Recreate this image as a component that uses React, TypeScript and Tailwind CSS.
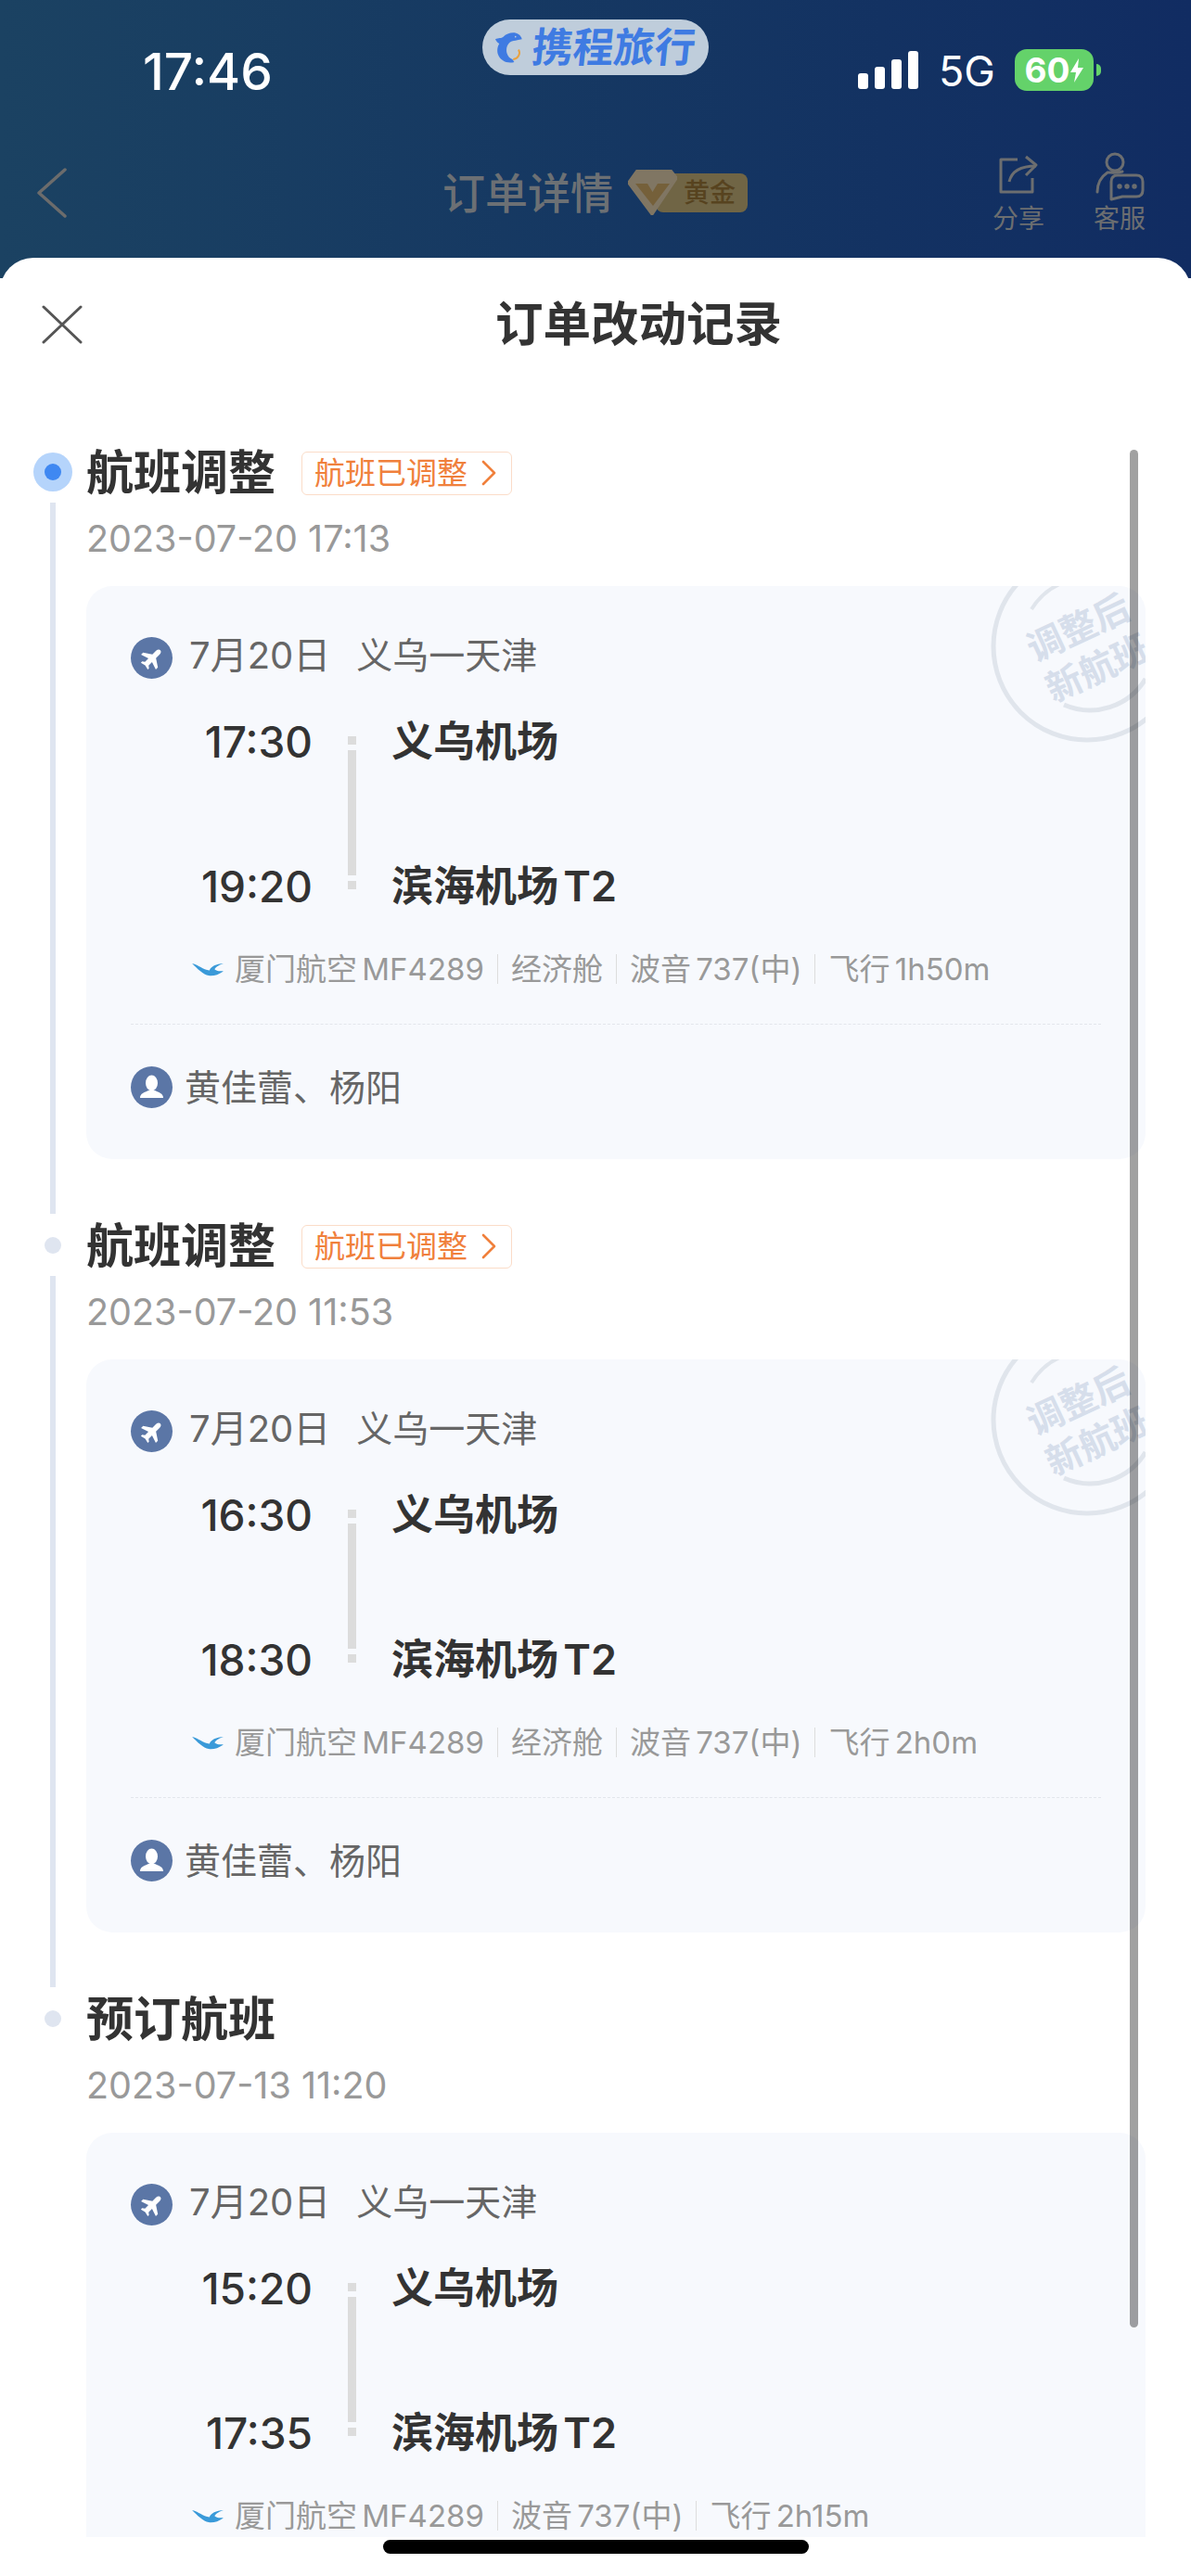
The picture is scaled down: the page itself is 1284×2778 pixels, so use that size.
type Flight = {
  title: string;
  time: string;
  badge: boolean;
  dep: string;
  arr: string;
  info: string[];
  passengers: boolean;
};

const ITEMS: Flight[] = [
  {
    title: "航班调整",
    time: "2023-07-20 17:13",
    badge: true,
    dep: "17:30",
    arr: "19:20",
    info: ["厦门航空 MF4289", "经济舱", "波音 737(中)", "飞行 1h50m"],
    passengers: true,
  },
  {
    title: "航班调整",
    time: "2023-07-20 11:53",
    badge: true,
    dep: "16:30",
    arr: "18:30",
    info: ["厦门航空 MF4289", "经济舱", "波音 737(中)", "飞行 2h0m"],
    passengers: true,
  },
  {
    title: "预订航班",
    time: "2023-07-13 11:20",
    badge: false,
    dep: "15:20",
    arr: "17:35",
    info: ["厦门航空 MF4289", "波音 737(中)", "飞行 2h15m"],
    passengers: false,
  },
];

function Dolphin() {
  return (
    <svg viewBox="0 0 88 100" className="h-[33px] w-[29px] shrink-0">
      <path
        d="M0 22C10 16 20 20 26 14C38 2 62-4 76 6C82 10 86 16 87 22L72 25C64 28 56 26 48 32C38 40 34 54 38 68C41 78 48 85 56 88L62 97C40 103 16 94 8 70C5 58 7 46 13 36C7 34 3 28 0 22Z"
        fill="#3f7be2"
      />
      <circle cx="66" cy="14" r="2.500" fill="#c3cfdc" />
      <path d="M76 56C84 70 74 86 58 88" fill="none" stroke="#e9a13f" strokeWidth="6" />
      <path d="M46 62C44 74 50 84 60 84" fill="none" stroke="#c3cfdc" strokeWidth="2.500" />
    </svg>
  );
}

function ShareIcon() {
  return (
    <svg viewBox="0 0 46 44" className="h-[44px] w-[46px]" fill="none" stroke="#6c6e70" strokeWidth="3">
      <path d="M22 5H4V40H38V25" strokeLinejoin="round" />
      <path d="M13 29C15 20 22 12 42 12" />
      <path d="M31 2L42 11L31 22" strokeLinejoin="round" />
    </svg>
  );
}

function ServiceIcon() {
  return (
    <svg viewBox="0 0 54 54" className="h-[54px] w-[54px]" fill="none" stroke="#6c6e70" strokeWidth="3">
      <circle cx="22" cy="12" r="9" />
      <path d="M3 44C3 34 8 27 14 23C18 23 24 24 30 22" strokeLinecap="round" />
      <path d="M18 52V33Q18 26 25 26H45Q52 26 52 33V42Q52 49 45 49H30L18 52Z" strokeLinejoin="round" />
      <circle cx="27" cy="38" r="1.2" />
      <circle cx="35" cy="38" r="1.2" />
      <circle cx="43" cy="38" r="1.2" />
    </svg>
  );
}

function GoldBadge() {
  return (
    <div className="ml-[18px] flex items-center">
      <svg viewBox="0 0 53 49" className="relative z-10 h-[49px] w-[53px]">
        <path d="M10 0H46L53 9L26 49L0 14Z" fill="#807663" stroke="#807663" strokeLinejoin="round" strokeWidth="2" />
        <path d="M8 15H21L26.5 24L32 15H45L27 39Z" fill="#75603a" />
      </svg>
      <div className="-ml-[23px] flex h-[42px] w-[99px] items-center justify-end rounded-[8px] bg-[#706545] pr-[13px] text-[28px] font-medium text-[#57431f]">
        黄金
      </div>
    </div>
  );
}

function CloseIcon() {
  return (
    <svg viewBox="0 0 44 42" className="h-[42px] w-[44px]" stroke="#555555" strokeWidth="3" strokeLinecap="round">
      <path d="M2 2L42 40M42 2L2 40" />
    </svg>
  );
}

function PlaneBadge() {
  return (
    <div className="flex size-[45px] shrink-0 items-center justify-center rounded-full bg-[#5b76a6]">
      <svg viewBox="0 0 24 24" className="size-[30px] rotate-45" fill="white">
        <path d="M12 2c1.200 0 2.200 1.200 2.200 3v4.500l6.800 4.500v2.500l-6.800-2.200v4.200l2 1.500v1.500l-4.200-1-4.200 1v-1.500l2-1.500v-4.200L3 16.500V14l6.800-4.500V5c0-1.800 1-3 2.200-3z" />
      </svg>
    </div>
  );
}

function PersonBadge() {
  return (
    <div className="flex size-[45px] shrink-0 items-center justify-center rounded-full bg-[#5b76a6]">
      <svg viewBox="0 0 45 45" className="size-[45px]" fill="white">
        <ellipse cx="22.500" cy="18" rx="6.500" ry="8.500" />
        <path d="M10 34C10 29 15 28 19 26H26C30 28 35 29 35 34Z" />
      </svg>
    </div>
  );
}

function AirlineLogo() {
  return (
    <svg viewBox="0 0 36 16" className="h-[15px] w-[34px] shrink-0" fill="#3a9ad9">
      <path d="M0 1C8 3 12 8 20 9C21 5 28 1 36 1C30 3 26 6 26 8C28 10 33 10 36 10C30 14 24 16 19 15C13 14 6 7 0 1Z" />
    </svg>
  );
}

function Stamp() {
  return (
    <svg viewBox="0 0 240 240" className="absolute -top-[55px] -right-[57px] size-[240px]" fill="none">
      <circle cx="120" cy="120" r="101" stroke="#e0e5ec" strokeWidth="5" />
      <path d="M60 80A72 72 0 0 1 150 52" stroke="#e0e5ec" strokeWidth="4" />
      <path d="M95 183A70 70 0 0 0 183 155" stroke="#e0e5ec" strokeWidth="5" />
      <g transform="rotate(-25 120 120)" fill="#d6deeb" fontSize="39" fontWeight="700" textAnchor="middle">
        <text x="120" y="112">调整后</text>
        <text x="120" y="160">新航班</text>
      </g>
    </svg>
  );
}

function FlightCard({ item }: { item: Flight }) {
  return (
    <div className="relative mt-[28px] h-[618px] w-[1142px] overflow-hidden rounded-[28px] bg-[#f7f9fd] pt-[55px] pl-[48px]">
      {item.badge ? <Stamp /> : null}
      <div className="flex h-[45px] items-center text-[#666666]">
        <PlaneBadge />
        <span className="ml-[18px] -translate-y-[3px] text-[40px] leading-none">7月20日</span>
        <span className="ml-[28px] -translate-y-[3px] text-[39px] leading-none">义乌一天津</span>
      </div>

      <div className="mt-[43px] flex h-[206px]">
        <div className="flex w-[196px] flex-col items-end justify-between text-[46px] leading-[50px] font-medium text-[#333333]">
          <span>{item.dep}</span>
          <span>{item.arr}</span>
        </div>
        <div className="ml-[38px] flex w-[9px] flex-col gap-[6px] pt-[19px] pb-[22px]">
          <div className="h-[9px] bg-[#dcdcdc]" />
          <div className="flex-1 bg-[#dcdcdc]" />
          <div className="h-[9px] bg-[#dcdcdc]" />
        </div>
        <div className="ml-[38px] flex flex-col justify-between text-[45px] leading-[50px] font-semibold [word-spacing:-6px] text-[#333333]">
          <span>义乌机场</span>
          <span>滨海机场 T2</span>
        </div>
      </div>

      <div className="mt-[44px] flex h-[40px] items-center pl-[66px] text-[33px] leading-none [word-spacing:-4px] text-[#999999]">
        <AirlineLogo />
        <div className="ml-[12px] flex items-center gap-[14px]">
          {item.info.map((text, i) => (
            <div key={text} className="flex items-center gap-[14px]">
              {i > 0 ? <div className="h-[32px] w-px bg-[#dddddd]" /> : null}
              <span>{text}</span>
            </div>
          ))}
        </div>
      </div>

      <div className="mt-[39px] mr-[48px] border-t border-dashed border-[#e3e6ec]" />

      {item.passengers ? (
        <div className="mt-[45px] flex h-[45px] items-center">
          <PersonBadge />
          <span className="ml-[13px] text-[39px] leading-none text-[#666666]">黄佳蕾、杨阳</span>
        </div>
      ) : null}
    </div>
  );
}

function TimelineItem({ item, index }: { item: Flight; index: number }) {
  const last = index === ITEMS.length - 1;
  return (
    <div className="flex pb-[68px] last:pb-0">
      <div className="ml-[36px] flex w-[42px] shrink-0 flex-col items-center">
        <div className="flex h-[50px] items-center">
          {index === 0 ? (
            <div className="flex size-[42px] items-center justify-center rounded-full bg-[#b5d4fb]">
              <div className="size-[18px] rounded-full bg-[#3f88f2]" />
            </div>
          ) : (
            <div className="size-[18px] rounded-full bg-[#dfe5f0]" />
          )}
        </div>
        {last ? null : <div className="mt-[8px] -mb-[59px] w-[6px] flex-1 bg-[#dfe5f0]" />}
      </div>
      <div className="ml-[15px] min-w-0 flex-1">
        <div className="flex h-[52px] items-center">
          <span className="text-[51px] leading-[52px] font-semibold whitespace-nowrap text-[#333333]">{item.title}</span>
          {item.badge ? (
            <div className="ml-[28px] flex h-[47px] w-[227px] items-center rounded-[6px] border border-[#fbdcc8] bg-white pl-[13px] text-[33px] leading-none text-[#f0803c]">
              航班已调整
              <svg viewBox="0 0 16 28" className="ml-[15px] h-[28px] w-[16px]" fill="none" stroke="#f0803c" strokeWidth="2.600">
                <path d="M2 2L14 14L2 26" strokeLinecap="round" strokeLinejoin="round" />
              </svg>
            </div>
          ) : null}
        </div>
        <div className="mt-[22px] h-[46px] text-[39.5px] leading-[46px] text-[#999999]">{item.time}</div>
        <FlightCard item={item} />
      </div>
    </div>
  );
}

export default function App() {
  return (
    <div className="flex h-[2778px] w-[1284px] flex-col overflow-hidden bg-white font-['Inter','Noto_Sans_CJK_SC',sans-serif]">
      <header className="h-[300px] shrink-0 bg-gradient-to-r from-[#1b4262] to-[#112c62]">
        <div className="flex h-[139px] pt-[21px]">
          <div className="mt-[24px] ml-[154px] h-[64px] w-[366px] text-[55px] leading-[64px] font-medium text-white">17:46</div>
          <div className="flex h-[60px] w-[244px] items-center gap-[11px] rounded-full bg-[#bfcddb] pl-[14px]">
            <Dolphin />
            <span className="-skew-x-6 text-[44px] leading-none font-bold text-[#3f7be2]">携程旅行</span>
          </div>
          <div className="ml-[161px] flex h-[75px] items-end gap-[7px] self-start">
            <div className="h-[17px] w-[11px] rounded-[3px] bg-white" />
            <div className="h-[24px] w-[11px] rounded-[3px] bg-white" />
            <div className="h-[32px] w-[11px] rounded-[3px] bg-white" />
            <div className="h-[41px] w-[11px] rounded-[3px] bg-white" />
          </div>
          <div className="mt-[31px] ml-[22px] h-[50px] text-[45px] leading-[50px] text-white">5G</div>
          <div className="mt-[32px] ml-[21px] flex h-[45px] w-[85px] items-center justify-center gap-[1px] self-start rounded-[13px] bg-[#64d26a] text-[37px] leading-none font-bold text-white">
            60
            <svg viewBox="0 0 14 26" className="h-[26px] w-[14px]" fill="white">
              <path d="M9 0L0 15H6L4 26L14 10H8Z" />
            </svg>
          </div>
          <div className="mt-[48px] ml-[3px] h-[13px] w-[5px] self-start rounded-r-full bg-[#64d26a]" />
        </div>

        <div className="flex h-[110px] items-start">
          <svg viewBox="0 0 33 54" className="mt-[42px] ml-[39px] h-[54px] w-[33px]" fill="none" stroke="#6c6c6c" strokeWidth="3.500">
            <path d="M31 2L3 27L31 52" strokeLinecap="round" strokeLinejoin="round" />
          </svg>
          <div className="mt-[43px] ml-[405px] text-[46px] leading-[52px] font-medium text-[#6c7074]">订单详情</div>
          <div className="mt-[44px] -ml-[2px]">
            <GoldBadge />
          </div>
          <div className="flex-1" />
          <div className="mt-[28px] flex w-[60px] flex-col items-center text-[28px] leading-[36px] text-[#6c6e70]">
            <ShareIcon />
            <span className="mt-[7px] whitespace-nowrap">分享</span>
          </div>
          <div className="mt-[24px] mr-[50px] ml-[52px] flex w-[54px] flex-col items-center text-[28px] leading-[36px] text-[#6c6e70]">
            <ServiceIcon />
            <span className="mt-[1px] whitespace-nowrap">客服</span>
          </div>
        </div>
      </header>

      <main className="relative -mt-[22px] flex min-h-0 flex-1 flex-col rounded-t-[36px] bg-white">
        <div className="flex h-[144px] shrink-0 items-center">
          <div className="ml-[45px]">
            <CloseIcon />
          </div>
          <div className="ml-[445px] text-[51.5px] leading-none font-semibold text-[#333333]">订单改动记录</div>
        </div>
        <div className="relative mt-[62px] min-h-0 flex-1 overflow-hidden">
          {ITEMS.map((item, i) => (
            <TimelineItem key={item.time} item={item} index={i} />
          ))}
        </div>
        <div className="absolute top-[207px] left-[1218px] h-[2025px] w-[9px] rounded-full bg-black/[.37]" />
        <div className="flex h-[42px] shrink-0 justify-center pt-[3px]">
          <div className="h-[15px] w-[459px] rounded-full bg-black" />
        </div>
      </main>
    </div>
  );
}
